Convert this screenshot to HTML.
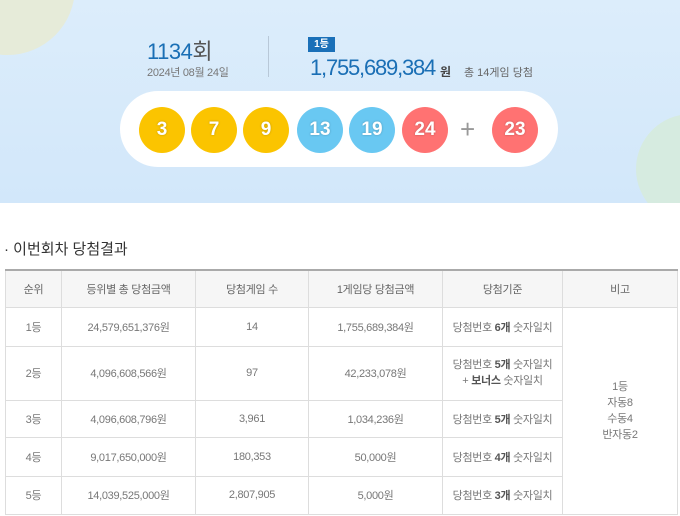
<!DOCTYPE html>
<html><head><meta charset="utf-8"><style>
*{margin:0;padding:0;box-sizing:border-box}
body{width:680px;height:516px;overflow:hidden;background:#fff;font-family:"Liberation Sans","Noto Sans CJK KR",sans-serif;position:relative}
.top{position:absolute;left:0;top:0;width:680px;height:203px;background:linear-gradient(#dcedfb,#d2e7fa);overflow:hidden}
.c1{position:absolute;left:-60px;top:-80px;width:135px;height:135px;border-radius:50%;background:#e6ebd9}
.c2{position:absolute;left:636px;top:114px;width:110px;height:110px;border-radius:50%;background:#d6ebe0}
.a{position:absolute;white-space:nowrap}
.ball{position:absolute;top:107px;width:46px;height:46px;border-radius:50%;color:#fff;font-size:19px;font-weight:bold;text-align:center;line-height:46px;text-shadow:0 0 2px rgba(0,0,0,.25)}
.y{background:#fbc400}.b{background:#69c8f2}.r{background:#ff7272}
table{position:absolute;left:5px;top:269px;width:673px;border-collapse:collapse;border-top:2px solid #aaa;font-size:11px;color:#777;text-align:center;letter-spacing:-0.3px}
td,th{border:1px solid #ddd;font-weight:normal}
th{background:#f6f6f6;height:37px;color:#666}
b{color:#555}
</style></head><body>
<div class="top">
<div class="c1"></div><div class="c2"></div>
<div class="a" style="left:147px;top:34px;font-size:22px;color:#1a6fb5;letter-spacing:-0.5px">1134<span style="color:#555">회</span></div>
<div class="a" style="left:147px;top:64px;font-size:11px;color:#777;letter-spacing:-0.3px">2024년 08월 24일</div>
<div class="a" style="left:268px;top:36px;width:1px;height:41px;background:#b8c8d8"></div>
<div class="a" style="left:308px;top:37px;width:27px;height:15px;background:#1a70b8;color:#fff;font-size:10px;font-weight:bold;text-align:center;line-height:15px">1등</div>
<div class="a" style="left:310px;top:55px;font-size:22px;color:#1a6fb5;letter-spacing:-1.2px">1,755,689,384</div>
<div class="a" style="left:440px;top:63px;font-size:12px;font-weight:bold;color:#444">원</div>
<div class="a" style="left:464px;top:64px;font-size:11px;color:#666">총 14게임 당첨</div>
<div class="a" style="left:120px;top:91px;width:438px;height:76px;border-radius:38px;background:#fff"></div>
<div class="ball y" style="left:139px">3</div>
<div class="ball y" style="left:191px">7</div>
<div class="ball y" style="left:243px">9</div>
<div class="ball b" style="left:297px">13</div>
<div class="ball b" style="left:349px">19</div>
<div class="ball r" style="left:402px">24</div>
<div class="a" style="left:460px;top:114px;font-size:26px;color:#999">+</div>
<div class="ball r" style="left:492px">23</div>
</div>
<div class="a" style="left:4px;top:238px;font-size:15px;color:#333">· 이번회차 당첨결과</div>
<table>
<tr><th style="width:56px">순위</th><th style="width:134px">등위별 총 당첨금액</th><th style="width:113px">당첨게임 수</th><th style="width:134px">1게임당 당첨금액</th><th style="width:120px">당첨기준</th><th>비고</th></tr>
<tr style="height:39px"><td>1등</td><td>24,579,651,376원</td><td>14</td><td>1,755,689,384원</td><td>당첨번호 <b>6개</b> 숫자일치</td><td rowspan="5" style="line-height:16px">1등<br>자동8<br>수동4<br>반자동2</td></tr>
<tr style="height:54px"><td>2등</td><td>4,096,608,566원</td><td>97</td><td>42,233,078원</td><td style="line-height:16px">당첨번호 <b>5개</b> 숫자일치<br>+ <b>보너스</b> 숫자일치</td></tr>
<tr style="height:37px"><td>3등</td><td>4,096,608,796원</td><td>3,961</td><td>1,034,236원</td><td>당첨번호 <b>5개</b> 숫자일치</td></tr>
<tr style="height:39px"><td>4등</td><td>9,017,650,000원</td><td>180,353</td><td>50,000원</td><td>당첨번호 <b>4개</b> 숫자일치</td></tr>
<tr style="height:38px"><td>5등</td><td>14,039,525,000원</td><td>2,807,905</td><td>5,000원</td><td>당첨번호 <b>3개</b> 숫자일치</td></tr>
</table>
</body></html>
